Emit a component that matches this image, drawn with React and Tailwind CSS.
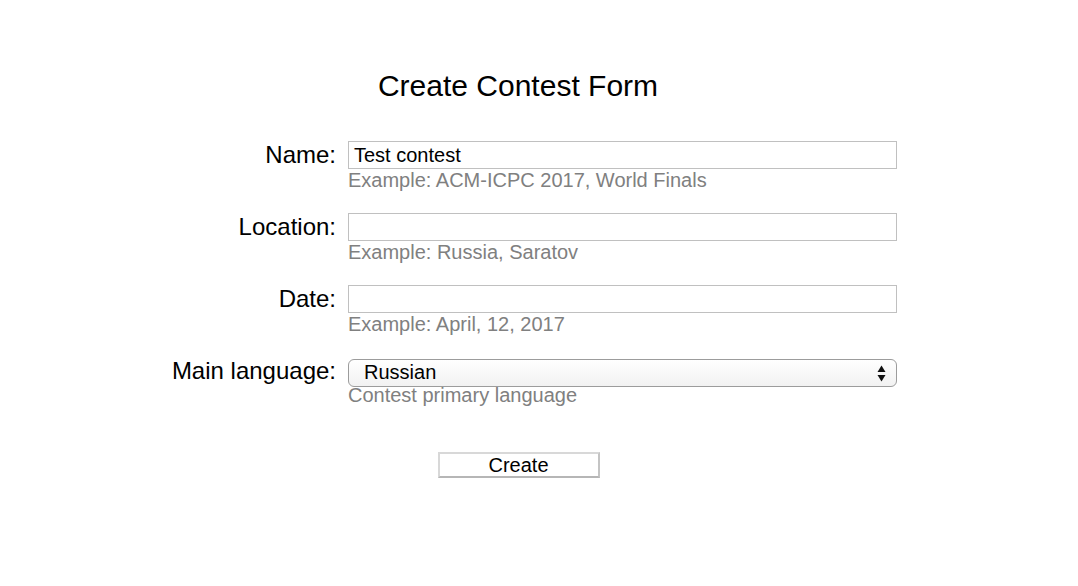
import React from "react";

function Row({ label, children, hint, hintClass = "" }) {
  return (
    <div className="flex items-start mb-[21px]">
      <div className="w-[336px] text-right text-[24px] leading-[28px] text-black">{label}</div>
      <div className="ml-[12px] w-[549px]">
        {children}
        <div className={"text-[20px] leading-[23px] text-[#808080] " + hintClass}>{hint}</div>
      </div>
    </div>
  );
}

function TextBox({ value }) {
  return (
    <div className="h-[28px] w-[549px] border border-[#c0c0c0] bg-white px-[5px] flex items-center text-[20px] leading-[23px] text-black">
      {value}
    </div>
  );
}

export default function App() {
  return (
    <div className="w-[1078px] h-[586px] bg-white font-['Liberation_Sans',Arial,Helvetica,sans-serif] overflow-hidden">
      <div className="pt-[69px] w-[1036px] text-center text-[30px] leading-[34px] text-black">
        Create Contest Form
      </div>
      <div className="mt-[38px] pb-[1px]">
        <Row label="Name:" hint="Example: ACM-ICPC 2017, World Finals">
          <TextBox value="Test contest" />
        </Row>
        <Row label="Location:" hint="Example: Russia, Saratov">
          <TextBox value="" />
        </Row>
        <Row label="Date:" hint="Example: April, 12, 2017">
          <TextBox value="" />
        </Row>
        <Row label="Main language:" hint="Contest primary language" hintClass="-mt-[3px] relative">
          <div className="mt-[2px] h-[28px] w-[549px] rounded-[6px] border-[1.5px] border-[#9c9c9c] bg-gradient-to-b from-white to-[#f2f2f2] pl-[15px] pr-[10px] pb-[2px] flex items-center justify-between text-[20px] leading-[23px] text-black">
            <span>Russian</span>
            <svg width="9" height="17" viewBox="0 0 9 17" className="mt-[2px]">
              <polygon points="4.5,0.5 8.5,7 0.5,7" fill="#111" />
              <polygon points="0.5,10 8.5,10 4.5,16.5" fill="#111" />
            </svg>
          </div>
        </Row>
      </div>
      <div className="w-[1037px] flex justify-center mt-[23px]">
        <div className="w-[162px] h-[26px] bg-white border-2 border-t-[#d8d8d8] border-l-[#d8d8d8] border-b-[#b6b6b6] border-r-[#c4c4c4] flex items-center justify-center text-[20px] leading-[23px] text-black">
          Create
        </div>
      </div>
    </div>
  );
}
